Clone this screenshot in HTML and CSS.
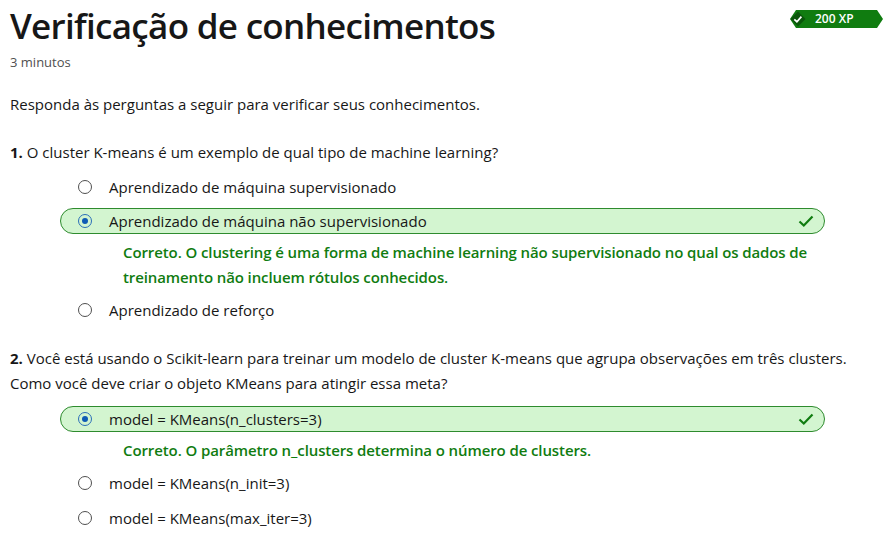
FILE: index.html
```html
<!DOCTYPE html>
<html lang="pt">
<head>
<meta charset="utf-8">
<link rel="stylesheet" href="styles.css">
</head>
<body>
<header class="head">
  <h1 class="title">Verificação de conhecimentos</h1>
  <div class="xp">
    <svg class="xp-shape" width="96" height="18" viewBox="0 0 96 18">
      <polygon points="8,0 89,0 95,9 89,18 8,18 2,9" fill="#107c10"/>
      <polygon points="10,1.5 17.5,9 10,16.5 2.5,9" fill="#0a560a"/>
      <path d="M6.3 9.3 L8.9 11.7 L13.4 6.6" fill="none" stroke="#fff" stroke-width="1.7"/>
    </svg>
    <span class="xp-text">200 XP</span>
  </div>
</header>
<p class="meta">3 minutos</p>
<p class="intro">Responda às perguntas a seguir para verificar seus conhecimentos.</p>

<section class="question">
  <p class="q"><b>1.</b> O cluster K-means é um exemplo de qual tipo de machine learning?</p>
  <div class="options">
    <div class="opt"><span class="radio"></span><span class="label">Aprendizado de máquina supervisionado</span></div>
    <div class="opt correct"><span class="radio on"></span><span class="label">Aprendizado de máquina não supervisionado</span>
      <svg class="check" width="16" height="14" viewBox="0 0 16 14"><path d="M1.5 7.5 L5.8 11.5 L14.5 2.5" fill="none" stroke="#107c10" stroke-width="2.2"/></svg>
    </div>
    <p class="feedback">Correto. O clustering é uma forma de machine learning não supervisionado no qual os dados de treinamento não incluem rótulos conhecidos.</p>
    <div class="opt"><span class="radio"></span><span class="label">Aprendizado de reforço</span></div>
  </div>
</section>

<section class="question q2">
  <p class="q"><b>2.</b> Você está usando o Scikit-learn para treinar um modelo de cluster K-means que agrupa observações em três clusters. Como você deve criar o objeto KMeans para atingir essa meta?</p>
  <div class="options">
    <div class="opt correct"><span class="radio on"></span><span class="label">model = KMeans(n_clusters=3)</span>
      <svg class="check" width="16" height="14" viewBox="0 0 16 14"><path d="M1.5 7.5 L5.8 11.5 L14.5 2.5" fill="none" stroke="#107c10" stroke-width="2.2"/></svg>
    </div>
    <p class="feedback">Correto. O parâmetro n_clusters determina o número de clusters.</p>
    <div class="opt"><span class="radio"></span><span class="label">model = KMeans(n_init=3)</span></div>
    <div class="opt last"><span class="radio"></span><span class="label">model = KMeans(max_iter=3)</span></div>
  </div>
</section>
</body>
</html>
```

FILE: styles.css
```css
html, body {
  margin: 0;
  background: #ffffff;
}
body {
  padding: 0 10px;
  font-family: "Open Sans", "Noto Sans", sans-serif;
  font-size: 15px;
  color: #171717;
}
.head {
  display: flex;
  justify-content: space-between;
  align-items: flex-start;
}
.title {
  margin: 0;
  font-size: 35px;
  font-weight: 600;
  line-height: 52px;
  letter-spacing: -0.7px;
}
.xp {
  position: relative;
  width: 96px;
  height: 18px;
  margin-top: 10px;
  margin-right: -6px;
}
.xp-shape {
  display: block;
}
.xp-text {
  position: absolute;
  left: 27px;
  top: 0;
  line-height: 18px;
  font-size: 12px;
  font-weight: 600;
  color: #ffffff;
}
.meta {
  margin: 0;
  font-size: 13px;
  line-height: 20px;
  color: #505050;
}
.intro {
  margin: 20px 0 0;
  line-height: 25px;
}
.question {
  margin-top: 23px;
}
.q2 {
  margin-top: 19px;
}
.q {
  margin: 0;
  line-height: 25px;
}
.q b {
  font-weight: 700;
}
.options {
  display: flex;
  flex-direction: column;
  margin-left: 50px;
  width: 765px;
  margin-top: 5px;
}
.q2 .options {
  margin-top: 6px;
}
.opt {
  display: flex;
  align-items: center;
  height: 26px;
  margin: 4px 0;
  padding-left: 17px;
  border: 1px solid transparent;
  border-radius: 14px;
  box-sizing: border-box;
}
.opt.last {
  margin-top: 5px;
}
.opt.correct {
  background: #d3f5d0;
  border-color: #2e8b2e;
}
.radio {
  width: 14px;
  height: 14px;
  border: 1px solid #4f4f4f;
  border-radius: 50%;
  box-sizing: border-box;
  display: flex;
  align-items: center;
  justify-content: center;
  flex: none;
}
.radio.on {
  border-color: #2b6fb8;
}
.radio.on::after {
  content: "";
  width: 6px;
  height: 6px;
  border-radius: 50%;
  background: #0f5bb5;
}
.label {
  margin-left: 17px;
}
.check {
  margin-left: auto;
  margin-right: 10px;
}
.feedback {
  margin: 0;
  padding: 2px 0 3px 63px;
  line-height: 25px;
  color: #107c10;
  font-weight: 600;
  letter-spacing: -0.1px;
}
```
